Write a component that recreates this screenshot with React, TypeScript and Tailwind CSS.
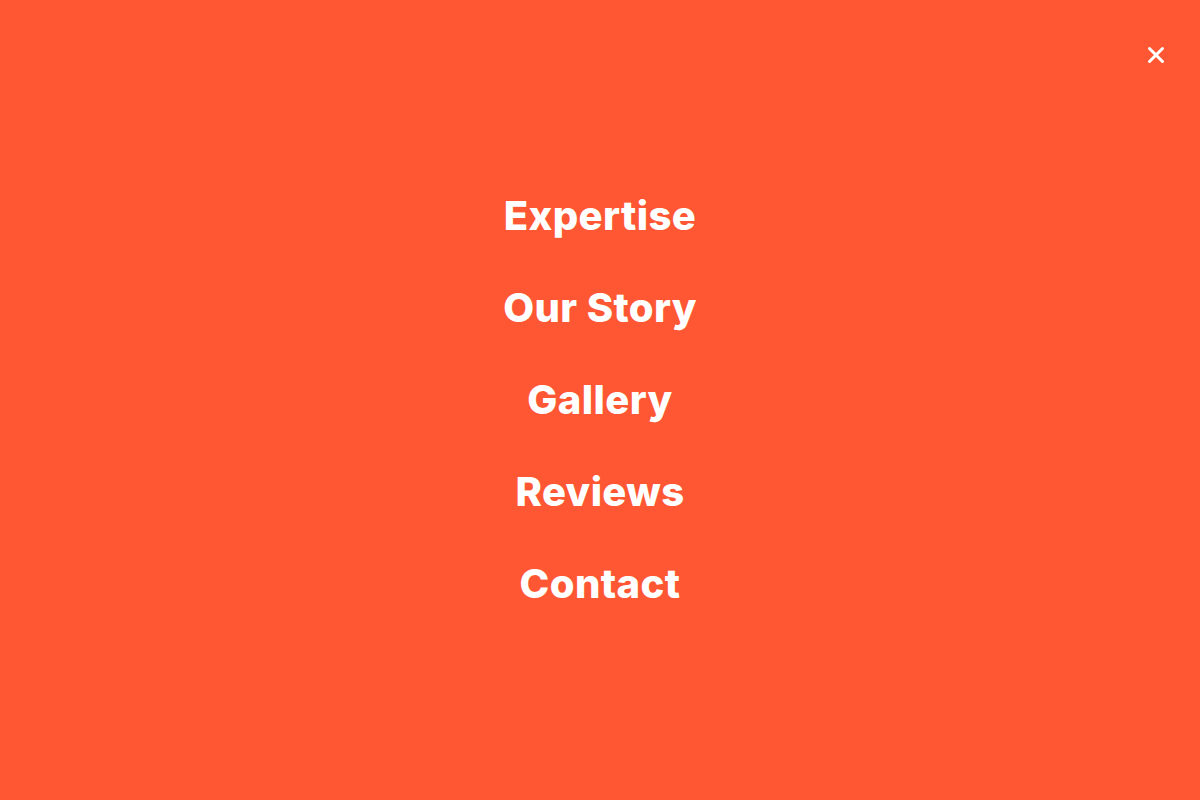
const LINKS = ["Expertise", "Our Story", "Gallery", "Reviews", "Contact"]

export default function App() {
  return (
    <main className="relative flex h-[800px] w-full flex-col items-center justify-center bg-[#ff5733] font-['Inter',sans-serif] text-white">
      <button className="absolute right-[34px] top-[45px] flex h-5 w-5 items-center justify-center" aria-label="Close menu">
        <svg width="18" height="18" viewBox="0 0 18 18" fill="none" stroke="white" strokeWidth="3" strokeLinecap="round">
          <path d="M2.5 2.5 L15.5 15.5 M15.5 2.5 L2.5 15.5" />
        </svg>
      </button>

      <nav className="flex flex-col items-center gap-[44px]">
        {LINKS.map((label) => (
          <a key={label} href="#" className="text-[40px] font-extrabold leading-[48px] tracking-[0.01em]">
            {label}
          </a>
        ))}
      </nav>
    </main>
  )
}
